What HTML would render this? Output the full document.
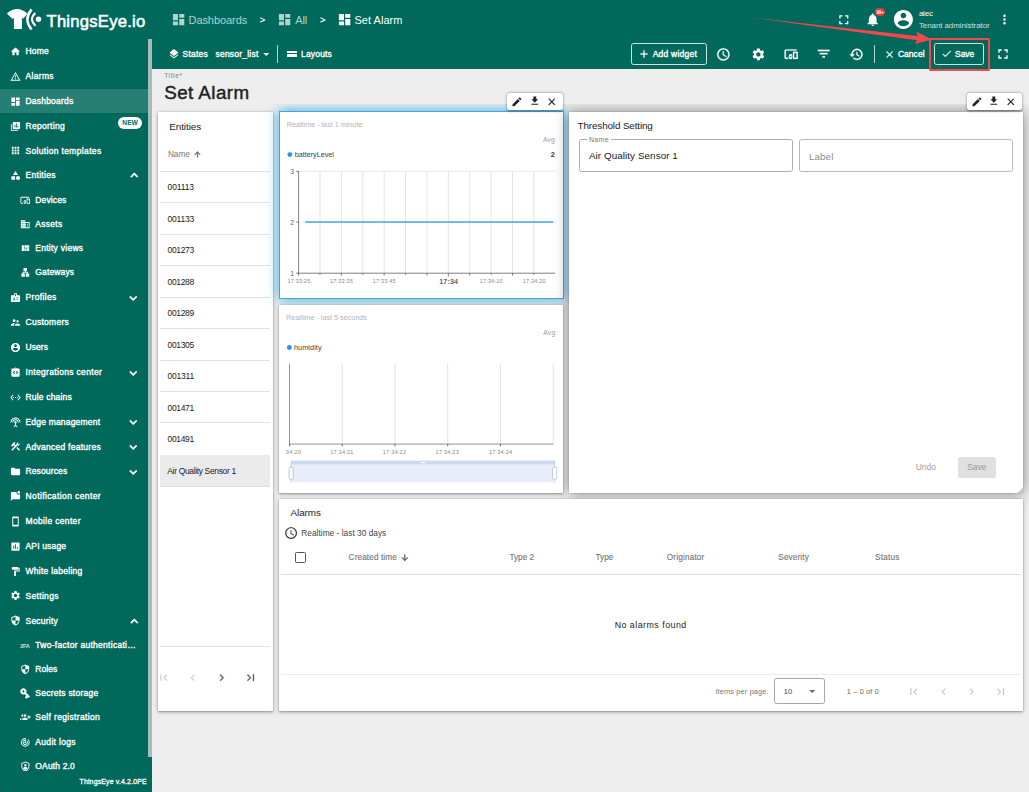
<!DOCTYPE html>
<html lang="en"><head><meta charset="utf-8"><title>Set Alarm - ThingsEye.io</title>
<style>
html,body{margin:0;padding:0}
body{width:1029px;height:792px;overflow:hidden;background:#eeeeee;position:relative;font-family:"Liberation Sans",sans-serif}
#app{position:absolute;left:0;top:0;width:1029px;height:792px;overflow:hidden}
#app div,#app svg,#app span{position:absolute;box-sizing:border-box}
.t{white-space:nowrap;font-weight:400}
.m{-webkit-text-stroke:0.04em currentColor}
.m2{-webkit-text-stroke:0.05em currentColor}
.b{font-weight:700}
.card{background:#fff;box-shadow:0 1px 2px rgba(0,0,0,.26),0 1px 5px rgba(0,0,0,.2),0 0 1px rgba(0,0,0,.2)}
</style></head><body><div id="app">
<div style="left:0px;top:0px;width:1029px;height:69px;background:#00695c"></div>
<div style="left:0px;top:39px;width:152px;height:753px;background:#00695c"></div>
<div style="left:0px;top:89px;width:148px;height:24px;background:rgba(255,255,255,.15)"></div>
<div style="left:148px;top:39px;width:4px;height:718px;background:#a6bcb8"></div>
<div style="left:0px;top:39px;width:148px;height:1px;background:rgba(0,0,0,.05)"></div>
<div style="left:0px;top:63px;width:148px;height:1px;background:rgba(0,0,0,.05)"></div>
<div style="left:0px;top:88px;width:148px;height:1px;background:rgba(0,0,0,.05)"></div>
<div style="left:0px;top:113px;width:148px;height:1px;background:rgba(0,0,0,.05)"></div>
<div style="left:0px;top:138px;width:148px;height:1px;background:rgba(0,0,0,.05)"></div>
<div style="left:0px;top:162px;width:148px;height:1px;background:rgba(0,0,0,.05)"></div>
<div style="left:0px;top:285px;width:148px;height:1px;background:rgba(0,0,0,.05)"></div>
<div style="left:0px;top:310px;width:148px;height:1px;background:rgba(0,0,0,.05)"></div>
<div style="left:0px;top:334px;width:148px;height:1px;background:rgba(0,0,0,.05)"></div>
<div style="left:0px;top:359px;width:148px;height:1px;background:rgba(0,0,0,.05)"></div>
<div style="left:0px;top:384px;width:148px;height:1px;background:rgba(0,0,0,.05)"></div>
<div style="left:0px;top:409px;width:148px;height:1px;background:rgba(0,0,0,.05)"></div>
<div style="left:0px;top:434px;width:148px;height:1px;background:rgba(0,0,0,.05)"></div>
<div style="left:0px;top:459px;width:148px;height:1px;background:rgba(0,0,0,.05)"></div>
<div style="left:0px;top:484px;width:148px;height:1px;background:rgba(0,0,0,.05)"></div>
<div style="left:0px;top:508px;width:148px;height:1px;background:rgba(0,0,0,.05)"></div>
<div style="left:0px;top:533px;width:148px;height:1px;background:rgba(0,0,0,.05)"></div>
<div style="left:0px;top:558px;width:148px;height:1px;background:rgba(0,0,0,.05)"></div>
<div style="left:0px;top:583px;width:148px;height:1px;background:rgba(0,0,0,.05)"></div>
<div style="left:0px;top:608px;width:148px;height:1px;background:rgba(0,0,0,.05)"></div>
<span id="t1" class="t" style="top:10.8px;font-size:16.6px;line-height:22px;color:#fff;letter-spacing:0.255px;left:46.5px;-webkit-text-stroke:0.55px #fff;">ThingsEye.io</span>
<svg style="left:0;top:0;width:46px;height:39px" viewBox="0 0 46 39"><path fill="#fff" d="M6.9 13.4 Q17.1 4.4 27.4 13.4 L23.3 18.7 L21.9 17.6 L21.9 29.1 L13.9 29.1 L13.9 17.8 L12.5 18.9 Z"/><path fill="none" stroke="#fff" stroke-width="2.5" d="M31.6 9.4 Q23.2 19.5 31.6 29.5"/><path fill="none" stroke="#fff" stroke-width="2.1" d="M35.3 12.9 Q28.6 19.3 35.5 25.7"/><circle fill="#fff" cx="38.5" cy="19.2" r="2.75"/></svg>
<svg style="left:9.8px;top:45.9px;width:11px;height:11px;" viewBox="0 0 24 24"><path fill="#fff" d="M10 20v-6h4v6h5v-8h3L12 3 2 12h3v8z"/></svg>
<span id="t2" class="t m" style="top:45.8px;font-size:8.5px;line-height:11px;color:#fff;letter-spacing:0.178px;left:25.5px;">Home</span>
<svg style="left:9.8px;top:70.8px;width:11px;height:11px;" viewBox="0 0 24 24"><path fill="#fff" d="M12 5.99L19.53 19H4.47L12 5.99M12 2L1 21h22L12 2zm1 14h-2v2h2v-2zm0-6h-2v4h2v-4z"/></svg>
<span id="t3" class="t m" style="top:70.8px;font-size:8.5px;line-height:11px;color:#fff;letter-spacing:0.324px;left:25.5px;">Alarms</span>
<svg style="left:9.8px;top:95.6px;width:11px;height:11px;" viewBox="0 0 24 24"><path fill="#fff" d="M3 13h8V3H3v10zm0 8h8v-6H3v6zm10 0h8V11h-8v10zm0-18v6h8V3h-8z"/></svg>
<span id="t4" class="t m" style="top:95.8px;font-size:8.5px;line-height:11px;color:#fff;letter-spacing:0.206px;left:25.5px;">Dashboards</span>
<svg style="left:9.8px;top:120.5px;width:11px;height:11px;" viewBox="0 0 24 24"><path fill="#fff" fill-rule="evenodd" d="M8 2h12c1.100 0 2 .9 2 2v12c0 1.100-.9 2-2 2H8c-1.100 0-2-.9-2-2V4c0-1.100.9-2 2-2z M10 14h1.800V8H10z M13.100 14h1.800V5.500h-1.800z M16.200 14H18v-3.500h-1.800z M2 6.500h1.800v13.700h13.700V22H4c-1.100 0-2-.9-2-2z"/></svg>
<span id="t5" class="t m" style="top:120.8px;font-size:8.5px;line-height:11px;color:#fff;letter-spacing:0.293px;left:25.5px;">Reporting</span>
<svg style="left:9.8px;top:145.3px;width:11px;height:11px;" viewBox="0 0 24 24"><path fill="#fff" d="M4 8h4V4H4v4zm6 12h4v-4h-4v4zm-6 0h4v-4H4v4zm0-6h4v-4H4v4zm6 0h4v-4h-4v4zm6-10v4h4V4h-4zm-6 4h4V4h-4v4zm6 6h4v-4h-4v4zm0 6h4v-4h-4v4z"/></svg>
<span id="t6" class="t m" style="top:145.8px;font-size:8.5px;line-height:11px;color:#fff;letter-spacing:0.337px;left:25.5px;">Solution templates</span>
<svg style="left:9.8px;top:169.8px;width:11px;height:11px;" viewBox="0 0 24 24"><path fill="#fff" d="M12 2l-5.5 9h11z M17.5 13a4.5 4.5 0 1 0 0 9 4.5 4.5 0 0 0 0-9z M3 13.5h8v8H3z"/></svg>
<span id="t7" class="t m" style="top:169.8px;font-size:8.5px;line-height:11px;color:#fff;letter-spacing:0.303px;left:25.5px;">Entities</span>
<svg style="left:9.8px;top:291.8px;width:11px;height:11px;" viewBox="0 0 24 24"><path fill="#fff" d="M20 7h-5V4c0-1.1-.9-2-2-2h-2c-1.1 0-2 .9-2 2v3H4c-1.1 0-2 .9-2 2v11c0 1.1.9 2 2 2h16c1.1 0 2-.9 2-2V9c0-1.1-.9-2-2-2zM9 12c.83 0 1.5.67 1.5 1.5S9.83 15 9 15s-1.5-.67-1.5-1.5S8.17 12 9 12zm3 6H6v-.75c0-1 2-1.5 3-1.5s3 .5 3 1.5V18zm1-9h-2V4h2v5zm5 7.5h-4V15h4v1.5zm0-3h-4V12h4v1.5z"/></svg>
<span id="t8" class="t m" style="top:291.8px;font-size:8.5px;line-height:11px;color:#fff;letter-spacing:0.357px;left:25.5px;">Profiles</span>
<svg style="left:9.8px;top:316.8px;width:11px;height:11px;" viewBox="0 0 24 24"><path fill="#fff" d="M16.5 12c1.38 0 2.49-1.12 2.49-2.5S17.88 7 16.5 7C15.12 7 14 8.12 14 9.5s1.12 2.5 2.500 2.5zM9 11c1.66 0 2.99-1.34 2.99-3S10.660 5 9 5C7.340 5 6 6.340 6 8s1.340 3 3 3zm7.500 3c-1.830 0-5.500.92-5.500 2.750V19h11v-2.250c0-1.830-3.670-2.750-5.500-2.750zM9 13c-2.330 0-7 1.170-7 3.500V19h7v-2.250c0-.85.33-2.340 2.370-3.470C10.500 13.100 9.660 13 9 13z"/></svg>
<span id="t9" class="t m" style="top:316.8px;font-size:8.5px;line-height:11px;color:#fff;letter-spacing:0.267px;left:25.5px;">Customers</span>
<svg style="left:9.8px;top:341.9px;width:11px;height:11px;" viewBox="0 0 24 24"><path fill="#fff" d="M12 2C6.480 2 2 6.480 2 12s4.480 10 10 10 10-4.480 10-10S17.520 2 12 2zm0 3c1.660 0 3 1.340 3 3s-1.340 3-3 3-3-1.340-3-3 1.340-3 3-3zm0 14.200c-2.500 0-4.710-1.280-6-3.220.03-1.990 4-3.080 6-3.080 1.990 0 5.970 1.090 6 3.080-1.290 1.940-3.500 3.220-6 3.220z"/></svg>
<span id="t10" class="t m" style="top:341.8px;font-size:8.5px;line-height:11px;color:#fff;letter-spacing:0.079px;left:25.5px;">Users</span>
<svg style="left:9.8px;top:366.9px;width:11px;height:11px;" viewBox="0 0 24 24"><path fill="#fff" d="M19 3h-4.180C14.400 1.840 13.300 1 12 1s-2.400.84-2.820 2H5c-1.100 0-2 .9-2 2v14c0 1.100.9 2 2 2h14c1.100 0 2-.9 2-2V5c0-1.100-.9-2-2-2zm-8 11.170-1.410 1.420L6 12l3.590-3.590L11 9.830 8.830 12 11 14.170zm1-9.920c-.41 0-.75-.34-.75-.75s.34-.75.75-.75.75.34.75.75-.34.75-.75.75zm2.410 11.340L13 14.170 15.170 12 13 9.830l1.410-1.420L18 12l-3.590 3.590z"/></svg>
<span id="t11" class="t m" style="top:366.8px;font-size:8.5px;line-height:11px;color:#fff;letter-spacing:0.326px;left:25.5px;">Integrations center</span>
<svg style="left:9.8px;top:391.7px;width:11px;height:11px;" viewBox="0 0 24 24"><path fill="#fff" d="M7.770 6.760L6.230 5.480.82 12l5.410 6.520 1.540-1.280L3.420 12l4.350-5.240zM7 13h2v-2H7v2zm10-2h-2v2h2v-2zm-6 2h2v-2h-2v2zm6.770-7.520l-1.540 1.280L20.580 12l-4.350 5.240 1.540 1.280L23.180 12l-5.410-6.520z"/></svg>
<span id="t12" class="t m" style="top:391.8px;font-size:8.5px;line-height:11px;color:#fff;letter-spacing:0.180px;left:25.5px;">Rule chains</span>
<svg style="left:9.8px;top:416.5px;width:11px;height:11px;" viewBox="0 0 24 24"><path fill="#fff" d="M12 5c-3.870 0-7 3.130-7 7h2c0-2.760 2.240-5 5-5s5 2.240 5 5h2c0-3.870-3.130-7-7-7zm1 9.290c.88-.39 1.500-1.260 1.500-2.290 0-1.380-1.120-2.500-2.500-2.500S9.500 10.620 9.500 12c0 1.020.62 1.900 1.500 2.290v3.300L7.590 21 9 22.410l3-3 3 3L16.410 21 13 17.590v-3.300zM12 1C5.930 1 1 5.930 1 12h2c0-4.970 4.030-9 9-9s9 4.030 9 9h2c0-6.070-4.930-11-11-11z"/></svg>
<span id="t13" class="t m" style="top:416.8px;font-size:8.5px;line-height:11px;color:#fff;letter-spacing:0.191px;left:25.5px;">Edge management</span>
<svg style="left:9.8px;top:441.3px;width:11px;height:11px;" viewBox="0 0 24 24"><path fill="#fff" d="M13.783 15.172l2.121-2.121 5.996 5.996-2.121 2.121zM17.500 10c1.930 0 3.500-1.570 3.500-3.500 0-.58-.16-1.120-.41-1.600l-2.700 2.700-1.490-1.490 2.700-2.700c-.48-.25-1.020-.41-1.600-.41C15.570 3 14 4.570 14 6.500c0 .41.080.8.210 1.160l-1.850 1.850-1.780-1.780.71-.71-1.410-1.410L12 3.490c-1.170-1.170-3.070-1.170-4.240 0L4.220 7.030l1.410 1.410H2.810l-.71.71 3.540 3.540.71-.71V9.150l1.410 1.410.71-.71 1.780 1.780-7.410 7.410 2.120 2.120L16.340 9.790c.36.130.75.210 1.160.210z"/></svg>
<span id="t14" class="t m" style="top:441.8px;font-size:8.5px;line-height:11px;color:#fff;letter-spacing:0.271px;left:25.5px;">Advanced features</span>
<svg style="left:9.8px;top:466.1px;width:11px;height:11px;" viewBox="0 0 24 24"><path fill="#fff" d="M10 4H4c-1.100 0-1.990.9-1.990 2L2 18c0 1.100.9 2 2 2h16c1.100 0 2-.9 2-2V8c0-1.100-.9-2-2-2h-8l-2-2z"/></svg>
<span id="t15" class="t m" style="top:465.8px;font-size:8.5px;line-height:11px;color:#fff;letter-spacing:0.129px;left:25.5px;">Resources</span>
<svg style="left:9.8px;top:490.9px;width:11px;height:11px;" viewBox="0 0 24 24"><path fill="#fff" d="M22 6.980V16c0 1.100-.9 2-2 2H6l-4 4V4c0-1.100.9-2 2-2h10.100c-.06.320-.1.660-.1 1 0 2.760 2.240 5 5 5 1.130 0 2.160-.39 3-1.020zM16 3c0 1.660 1.340 3 3 3s3-1.340 3-3-1.340-3-3-3-3 1.340-3 3z"/></svg>
<span id="t16" class="t m" style="top:490.8px;font-size:8.5px;line-height:11px;color:#fff;letter-spacing:0.392px;left:25.5px;">Notification center</span>
<svg style="left:9.8px;top:515.7px;width:11px;height:11px;" viewBox="0 0 24 24"><path fill="#fff" d="M17 1.010L7 1c-1.100 0-2 .9-2 2v18c0 1.100.9 2 2 2h10c1.100 0 2-.9 2-2V3c0-1.100-.9-1.990-2-1.990zM17 19H7V5h10v14z"/></svg>
<span id="t17" class="t m" style="top:515.8px;font-size:8.5px;line-height:11px;color:#fff;letter-spacing:0.328px;left:25.5px;">Mobile center</span>
<svg style="left:9.8px;top:540.8px;width:11px;height:11px;" viewBox="0 0 24 24"><path fill="#fff" d="M19 3H5c-1.100 0-2 .9-2 2v14c0 1.100.9 2 2 2h14c1.100 0 2-.9 2-2V5c0-1.100-.9-2-2-2zM9 17H7v-7h2v7zm4 0h-2V7h2v10zm4 0h-2v-4h2v4z"/></svg>
<span id="t18" class="t m" style="top:540.8px;font-size:8.5px;line-height:11px;color:#fff;letter-spacing:0.163px;left:25.5px;">API usage</span>
<svg style="left:9.8px;top:565.8px;width:11px;height:11px;" viewBox="0 0 24 24"><path fill="#fff" d="M18 4V3c0-.55-.45-1-1-1H5c-.55 0-1 .45-1 1v4c0 .55.45 1 1 1h12c.55 0 1-.45 1-1V6h1v4H9v11c0 .55.45 1 1 1h2c.55 0 1-.45 1-1v-9h8V4h-3z"/></svg>
<span id="t19" class="t m" style="top:565.8px;font-size:8.5px;line-height:11px;color:#fff;letter-spacing:0.265px;left:25.5px;">White labeling</span>
<svg style="left:9.8px;top:590.4px;width:11px;height:11px;" viewBox="0 0 24 24"><path fill="#fff" d="M19.140 12.940c.04-.3.060-.61.060-.94 0-.32-.02-.64-.07-.94l2.030-1.580c.18-.14.230-.41.120-.61l-1.920-3.320c-.12-.22-.37-.29-.59-.22l-2.390.96c-.5-.38-1.030-.7-1.620-.94l-.36-2.540c-.04-.24-.24-.41-.48-.41h-3.840c-.24 0-.43.170-.47.410l-.36 2.540c-.59.240-1.130.57-1.620.94l-2.390-.96c-.22-.08-.47 0-.59.220L2.740 8.870c-.12.210-.08.470.12.610l2.030 1.580c-.05.3-.09.630-.09.940s.02.640.07.940l-2.030 1.580c-.18.140-.23.410-.12.610l1.920 3.320c.12.220.37.290.59.220l2.390-.96c.5.380 1.030.7 1.620.94l.36 2.540c.05.240.24.410.48.410h3.840c.24 0 .44-.17.470-.41l.36-2.540c.59-.24 1.130-.56 1.620-.94l2.390.96c.22.080.47 0 .59-.22l1.920-3.320c.12-.22.070-.47-.12-.61l-2.010-1.580zM12 15.600c-1.980 0-3.600-1.620-3.600-3.600s1.620-3.600 3.600-3.600 3.600 1.620 3.600 3.600-1.620 3.600-3.600 3.600z"/></svg>
<span id="t20" class="t m" style="top:590.8px;font-size:8.5px;line-height:11px;color:#fff;letter-spacing:0.323px;left:25.5px;">Settings</span>
<svg style="left:9.8px;top:615.4px;width:11px;height:11px;" viewBox="0 0 24 24"><path fill="#fff" d="M12 1L3 5v6c0 5.550 3.840 10.740 9 12 5.160-1.260 9-6.450 9-12V5l-9-4zm0 10.990h7c-.53 4.120-3.280 7.790-7 8.940V12H5V6.300l7-3.110v8.800z"/></svg>
<span id="t21" class="t m" style="top:615.8px;font-size:8.5px;line-height:11px;color:#fff;letter-spacing:0.223px;left:25.5px;">Security</span>
<svg style="left:19.75px;top:194.85px;width:10.5px;height:10.5px;" viewBox="0 0 24 24"><path fill="#fff" d="M3 6h18V4H3c-1.1 0-2 .9-2 2v12c0 1.1.9 2 2 2h4v-2H3V6zm10 6H9v1.78c-.61.55-1 1.33-1 2.22s.39 1.67 1 2.22V20h4v-1.78c.61-.55 1-1.34 1-2.22s-.39-1.67-1-2.22V12zm-2 5.5c-.83 0-1.5-.67-1.5-1.5s.67-1.5 1.5-1.5 1.5.67 1.5 1.5-.67 1.5-1.5 1.5zM22 8h-6c-.5 0-1 .5-1 1v10c0 .5.5 1 1 1h6c.5 0 1-.5 1-1V9c0-.5-.5-1-1-1zm-1 10h-4v-8h4v8z"/></svg>
<span id="t22" class="t m" style="top:194.8px;font-size:8.5px;line-height:11px;color:#fff;letter-spacing:0.138px;left:35.3px;">Devices</span>
<svg style="left:19.75px;top:218.95px;width:10.5px;height:10.5px;" viewBox="0 0 24 24"><path fill="#fff" d="M12 7V3H2v18h20V7H12zM6 19H4v-2h2v2zm0-4H4v-2h2v2zm0-4H4V9h2v2zm0-4H4V5h2v2zm4 12H8v-2h2v2zm0-4H8v-2h2v2zm0-4H8V9h2v2zm0-4H8V5h2v2zm10 12h-8v-2h2v-2h-2v-2h2v-2h-2V9h8v10zm-2-8h-2v2h2v-2zm0 4h-2v2h2v-2z"/></svg>
<span id="t23" class="t m" style="top:218.8px;font-size:8.5px;line-height:11px;color:#fff;letter-spacing:0.264px;left:35.3px;">Assets</span>
<svg style="left:19.75px;top:243.15px;width:10.5px;height:10.5px;" viewBox="0 0 24 24"><path fill="#fff" d="M10 18h5v-6h-5v6zm-6 0h5V5H4v13zm12 0h5v-6h-5v6zM10 5v6h11V5H10z"/></svg>
<span id="t24" class="t m" style="top:242.8px;font-size:8.5px;line-height:11px;color:#fff;letter-spacing:0.260px;left:35.3px;">Entity views</span>
<svg style="left:19.75px;top:267.25px;width:10.5px;height:10.5px;" viewBox="0 0 24 24"><path fill="#fff" d="M13 22h8v-7h-3v-4h-5V9h3V2H8v7h3v2H6v4H3v7h8v-7H8v-2h8v2h-3v7z"/></svg>
<span id="t25" class="t m" style="top:266.8px;font-size:8.5px;line-height:11px;color:#fff;letter-spacing:0.138px;left:35.3px;">Gateways</span>
<svg style="left:19.75px;top:663.95px;width:10.5px;height:10.5px;" viewBox="0 0 24 24"><path fill="#fff" d="M12 1L3 5v6c0 5.550 3.840 10.740 9 12 5.160-1.260 9-6.450 9-12V5l-9-4zm0 10.990h7c-.53 4.120-3.280 7.790-7 8.940V12H5V6.300l7-3.110v8.800z"/></svg>
<span id="t26" class="t m" style="top:663.8px;font-size:8.5px;line-height:11px;color:#fff;letter-spacing:0.033px;left:35.3px;">Roles</span>
<svg style="left:18.55px;top:686.85px;width:12.5px;height:12.5px;transform:rotate(45deg);" viewBox="0 0 24 24"><path fill="#fff" d="M12.650 10C11.830 7.670 9.610 6 7 6c-3.310 0-6 2.690-6 6s2.690 6 6 6c2.610 0 4.830-1.670 5.650-4H17v4h4v-4h2v-4H12.650zM7 14c-1.100 0-2-.9-2-2s.9-2 2-2 2 .9 2 2-.9 2-2 2z"/></svg>
<span id="t27" class="t m" style="top:687.8px;font-size:8.5px;line-height:11px;color:#fff;letter-spacing:0.238px;left:35.3px;">Secrets storage</span>
<svg style="left:19.6px;top:712.1px;width:10.8px;height:10.8px;transform:scaleX(-1);" viewBox="0 0 24 24"><path fill="#fff" d="M8 10H5V7H3v3H0v2h3v3h2v-3h3v-2zm10 1c1.660 0 2.990-1.340 2.990-3S19.660 5 18 5c-.32 0-.63.05-.91.140.57.81.9 1.790.9 2.860s-.34 2.040-.9 2.860c.28.090.59.140.91.140zm-5 0c1.660 0 2.990-1.340 2.990-3S14.660 5 13 5c-1.660 0-3 1.340-3 3s1.340 3 3 3zm6.620 2.160c.83.730 1.380 1.660 1.380 2.840v2h3v-2c0-1.540-2.370-2.490-4.380-2.840zM13 13c-2 0-6 1-6 3v2h12v-2c0-2-4-3-6-3z"/></svg>
<span id="t28" class="t m" style="top:711.8px;font-size:8.5px;line-height:11px;color:#fff;letter-spacing:0.337px;left:35.3px;">Self registration</span>
<svg style="left:19.75px;top:736.75px;width:10.5px;height:10.5px;" viewBox="0 0 24 24"><path fill="#fff" d="M19.070 4.930l-1.410 1.410C19.100 7.790 20 9.790 20 12c0 4.420-3.580 8-8 8s-8-3.580-8-8c0-4.080 3.050-7.440 7-7.930v2.020C8.160 6.570 6 9.030 6 12c0 3.310 2.690 6 6 6s6-2.690 6-6c0-1.660-.67-3.160-1.760-4.240l-1.410 1.410C15.550 9.900 16 10.900 16 12c0 2.210-1.790 4-4 4s-4-1.790-4-4c0-1.860 1.280-3.410 3-3.860v2.140c-.6.350-1 .98-1 1.720 0 1.100.9 2 2 2s2-.9 2-2c0-.74-.4-1.380-1-1.720V2h-1C6.480 2 2 6.480 2 12s4.480 10 10 10 10-4.480 10-10c0-2.760-1.120-5.260-2.930-7.070z"/></svg>
<span id="t29" class="t m" style="top:736.8px;font-size:8.5px;line-height:11px;color:#fff;letter-spacing:0.326px;left:35.3px;">Audit logs</span>
<svg style="left:19.6px;top:760.7px;width:10.8px;height:10.8px;" viewBox="0 0 24 24"><path fill="#fff" fill-rule="evenodd" d="M12 1L3 5v6c0 5.550 3.840 10.740 9 12 5.160-1.260 9-6.450 9-12V5l-9-4z M12 3.190L5 6.300V11c0 4.520 2.980 8.690 7 9.930 4.020-1.240 7-5.410 7-9.930V6.300l-7-3.110z M12 6.800a2.600 2.600 0 1 0 0 5.200 2.600 2.600 0 0 0 0-5.200z M7.300 16.300c0-1.900 3.100-2.800 4.700-2.800s4.700.9 4.700 2.800c-1.100 1.700-2.700 2.900-4.700 3.500-2-.6-3.600-1.800-4.700-3.500z"/></svg>
<span id="t30" class="t m" style="top:760.8px;font-size:8.5px;line-height:11px;color:#fff;letter-spacing:0.158px;left:35.3px;">OAuth 2.0</span>
<span id="t31" class="t b" style="top:642.8px;font-size:5.6px;line-height:7px;color:rgba(255,255,255,.8);letter-spacing:-0.289px;left:20.2px;">2FA</span>
<span id="t32" class="t m" style="top:639.8px;font-size:8.5px;line-height:11px;color:#fff;letter-spacing:0.279px;left:35.3px;">Two-factor authenticati…</span>
<svg style="left:126.95px;top:168.35px;width:14.5px;height:14.5px;" viewBox="0 0 24 24"><path fill="#fff" stroke="#fff" stroke-width="1.2" d="M12 8l-6 6 1.410 1.410L12 10.830l4.590 4.580L18 14z"/></svg>
<svg style="left:126.95px;top:613.95px;width:14.5px;height:14.5px;" viewBox="0 0 24 24"><path fill="#fff" stroke="#fff" stroke-width="1.2" d="M12 8l-6 6 1.410 1.410L12 10.830l4.590 4.580L18 14z"/></svg>
<svg style="left:126.45px;top:290.85px;width:14.5px;height:14.5px;" viewBox="0 0 24 24"><path fill="#fff" stroke="#fff" stroke-width="1.2" d="M16.590 8.590L12 13.170 7.410 8.590 6 10l6 6 6-6z"/></svg>
<svg style="left:126.45px;top:365.85px;width:14.5px;height:14.5px;" viewBox="0 0 24 24"><path fill="#fff" stroke="#fff" stroke-width="1.2" d="M16.590 8.590L12 13.170 7.410 8.590 6 10l6 6 6-6z"/></svg>
<svg style="left:126.45px;top:415.45px;width:14.5px;height:14.5px;" viewBox="0 0 24 24"><path fill="#fff" stroke="#fff" stroke-width="1.2" d="M16.590 8.590L12 13.170 7.410 8.590 6 10l6 6 6-6z"/></svg>
<svg style="left:126.45px;top:440.25px;width:14.5px;height:14.5px;" viewBox="0 0 24 24"><path fill="#fff" stroke="#fff" stroke-width="1.2" d="M16.590 8.590L12 13.170 7.410 8.590 6 10l6 6 6-6z"/></svg>
<svg style="left:126.45px;top:465.05px;width:14.5px;height:14.5px;" viewBox="0 0 24 24"><path fill="#fff" stroke="#fff" stroke-width="1.2" d="M16.590 8.590L12 13.170 7.410 8.590 6 10l6 6 6-6z"/></svg>
<div style="left:118.2px;top:116.8px;width:23.8px;height:12px;background:#fff;border-radius:6px"></div>
<span id="t33" class="t b" style="top:118.3px;font-size:6.6px;line-height:9px;color:#00695c;letter-spacing:0.036px;left:130.08px;transform:translateX(-50%);">NEW</span>
<span id="t34" class="t m" style="top:777.3px;font-size:6.9px;line-height:9px;color:#fff;letter-spacing:0.182px;left:79.5px;">ThingsEye v.4.2.0PE</span>
<svg style="left:0;top:0;width:3px;height:3px" viewBox="0 0 3 3"><path fill="#5e5660" d="M0 0H2.6A2.600 2.600 0 0 0 0 2.600Z"/></svg>
<svg style="left:0;top:789px;width:3px;height:3px" viewBox="0 0 3 3"><path fill="#5e5660" d="M0 3H2.600A2.600 2.600 0 0 1 0 .4Z"/></svg>
<span id="t35" class="t" style="top:71.3px;font-size:6.6px;line-height:9px;color:#808080;letter-spacing:0.603px;left:164.2px;">Title*</span>
<span id="t36" class="t" style="top:80.8px;font-size:18.8px;line-height:24px;color:#212121;letter-spacing:0.442px;left:164.2px;-webkit-text-stroke:0.42px #212121;">Set Alarm</span>
<div class="card" style="left:158px;top:112px;width:114.9px;height:598.5px;"></div>
<span id="t37" class="t" style="top:120.3px;font-size:9.9px;line-height:13px;color:#212121;letter-spacing:-0.086px;left:169.3px;">Entities</span>
<span id="t38" class="t" style="top:148.8px;font-size:8.3px;line-height:11px;color:#757575;letter-spacing:-0.060px;left:167.9px;">Name</span>
<svg style="left:192.5px;top:149.9px;width:8.8px;height:8.8px;" viewBox="0 0 24 24"><path fill="#555" stroke="#555" stroke-width="0.8" d="M4 12l1.410 1.410L11 7.830V20h2V7.830l5.580 5.590L20 12l-8-8-8 8z"/></svg>
<div style="left:160.2px;top:171px;width:110.1px;height:1px;background:#e2e2e2"></div>
<span id="t39" class="t" style="top:181.8px;font-size:8.5px;line-height:11px;color:#212121;letter-spacing:-0.135px;left:167.6px;">001113</span>
<div style="left:160.2px;top:202px;width:110.1px;height:1px;background:#e2e2e2"></div>
<span id="t40" class="t" style="top:213.8px;font-size:8.5px;line-height:11px;color:#212121;letter-spacing:-0.239px;left:167.6px;">001133</span>
<div style="left:160.2px;top:234px;width:110.1px;height:1px;background:#e2e2e2"></div>
<span id="t41" class="t" style="top:244.8px;font-size:8.5px;line-height:11px;color:#212121;letter-spacing:-0.346px;left:167.6px;">001273</span>
<div style="left:160.2px;top:265px;width:110.1px;height:1px;background:#e2e2e2"></div>
<span id="t42" class="t" style="top:276.8px;font-size:8.5px;line-height:11px;color:#212121;letter-spacing:-0.346px;left:167.6px;">001288</span>
<div style="left:160.2px;top:297px;width:110.1px;height:1px;background:#e2e2e2"></div>
<span id="t43" class="t" style="top:307.8px;font-size:8.5px;line-height:11px;color:#212121;letter-spacing:-0.346px;left:167.6px;">001289</span>
<div style="left:160.2px;top:328px;width:110.1px;height:1px;background:#e2e2e2"></div>
<span id="t44" class="t" style="top:339.8px;font-size:8.5px;line-height:11px;color:#212121;letter-spacing:-0.346px;left:167.6px;">001305</span>
<div style="left:160.2px;top:360px;width:110.1px;height:1px;background:#e2e2e2"></div>
<span id="t45" class="t" style="top:370.8px;font-size:8.5px;line-height:11px;color:#212121;letter-spacing:-0.239px;left:167.6px;">001311</span>
<div style="left:160.2px;top:391px;width:110.1px;height:1px;background:#e2e2e2"></div>
<span id="t46" class="t" style="top:402.8px;font-size:8.5px;line-height:11px;color:#212121;letter-spacing:-0.346px;left:167.6px;">001471</span>
<div style="left:160.2px;top:422px;width:110.1px;height:1px;background:#e2e2e2"></div>
<span id="t47" class="t" style="top:433.8px;font-size:8.5px;line-height:11px;color:#212121;letter-spacing:-0.346px;left:167.6px;">001491</span>
<div style="left:159.8px;top:455px;width:110.6px;height:31.6px;background:#ebebeb"></div>
<div style="left:159.8px;top:486px;width:110.6px;height:1px;background:#dcdcdc"></div>
<span id="t48" class="t" style="top:465.8px;font-size:8.5px;line-height:11px;color:#212121;letter-spacing:-0.355px;left:167.3px;">Air Quality Sensor 1</span>
<div style="left:159.8px;top:646px;width:110.6px;height:1px;background:#e2e2e2"></div>
<svg style="left:157.2px;top:671.2px;width:13.4px;height:13.4px;" viewBox="0 0 24 24"><path fill="#cdcdcd" d="M18.410 16.590L13.820 12l4.590-4.590L17 6l-6 6 6 6zM6 6h2v12H6z"/></svg>
<svg style="left:186.3px;top:671.2px;width:13.4px;height:13.4px;" viewBox="0 0 24 24"><path fill="#cdcdcd" d="M15.410 7.410L14 6l-6 6 6 6 1.410-1.410L10.830 12z"/></svg>
<svg style="left:215.1px;top:671.2px;width:13.4px;height:13.4px;" viewBox="0 0 24 24"><path fill="#606060" stroke="#606060" stroke-width="0.5" d="M10 6L8.590 7.410 13.170 12l-4.580 4.590L10 18l6-6z"/></svg>
<svg style="left:244.3px;top:671.2px;width:13.4px;height:13.4px;" viewBox="0 0 24 24"><path fill="#606060" stroke="#606060" stroke-width="0.5" d="M5.590 7.410L10.180 12l-4.590 4.590L7 18l6-6-6-6zM16 6h2v12h-2z"/></svg>
<div style="left:152px;top:104.4px;width:877px;height:688px;overflow:hidden"><div style="left:127px;top:6.600px;width:285px;height:188px;background:#fff;border:1px solid #42a5e0;box-shadow:0 0 12px rgba(3,155,229,.8)"></div></div>
<div style="left:507.1px;top:92.7px;width:55.8px;height:17.2px;background:#fff;border-radius:2.5px;box-shadow:0 .5px 2.5px rgba(0,0,0,.5)"></div>
<svg style="left:511.4px;top:95.5px;width:11.8px;height:11.8px;" viewBox="0 0 24 24"><path fill="#222" d="M3 17.250V21h3.750L17.810 9.940l-3.750-3.750L3 17.250zM20.710 7.040c.39-.39.39-1.020 0-1.410l-2.340-2.340c-.39-.39-1.020-.39-1.410 0l-1.830 1.830 3.750 3.750 1.830-1.830z"/></svg>
<svg style="left:528.8px;top:95.3px;width:11.6px;height:11.6px;" viewBox="0 0 24 24"><path fill="#222" d="M19 9h-4V3H9v6H5l7 7 7-7zM5 18v2h14v-2H5z"/></svg>
<svg style="left:545.7px;top:95.6px;width:11.6px;height:11.6px;" viewBox="0 0 24 24"><path fill="#222" stroke="#222" stroke-width="0.4" d="M19 6.410L17.590 5 12 10.590 6.410 5 5 6.410 10.590 12 5 17.590 6.410 19 12 13.410 17.590 19 19 17.590 13.410 12z"/></svg>
<span id="t49" class="t" style="top:120.3px;font-size:7.3px;line-height:9px;color:#b4b4b4;letter-spacing:-0.048px;left:286.8px;">Realtime - last 1 minute</span>
<span id="t50" class="t" style="top:135.3px;font-size:6.8px;line-height:9px;color:#a0a0a0;letter-spacing:0.135px;right:474.06px;">Avg</span>
<svg style="left:286px;top:151px;width:8px;height:8px" viewBox="0 0 8 8"><circle cx="3.85" cy="3.55" r="2.400" fill="#2196f3"/></svg>
<span id="t51" class="t" style="top:150.3px;font-size:7.3px;line-height:9px;color:#424242;letter-spacing:-0.047px;left:294.7px;">batteryLevel</span>
<span id="t52" class="t b" style="top:150.3px;font-size:7.3px;line-height:9px;color:#333;letter-spacing:0.338px;right:473.86px;">2</span>
<svg style="left:280px;top:160px;width:282px;height:130px" viewBox="280 160 282 130"><path d="M319.99 171.3V273.2" stroke="#d4d4d4" stroke-width=".65"/><path d="M341.38 171.3V273.2" stroke="#d4d4d4" stroke-width=".65"/><path d="M362.77 171.3V273.2" stroke="#d4d4d4" stroke-width=".65"/><path d="M384.16 171.3V273.2" stroke="#d4d4d4" stroke-width=".65"/><path d="M405.55 171.3V273.2" stroke="#d4d4d4" stroke-width=".65"/><path d="M426.94 171.3V273.2" stroke="#d4d4d4" stroke-width=".65"/><path d="M448.33 171.3V273.2" stroke="#d4d4d4" stroke-width=".65"/><path d="M469.72 171.3V273.2" stroke="#d4d4d4" stroke-width=".65"/><path d="M491.11 171.3V273.2" stroke="#d4d4d4" stroke-width=".65"/><path d="M512.50 171.3V273.2" stroke="#d4d4d4" stroke-width=".65"/><path d="M533.89 171.3V273.2" stroke="#d4d4d4" stroke-width=".65"/><path d="M298.6 171.3H555.3" stroke="#e0e0e0" stroke-width=".7"/><path d="M298.6 222.1H555.3" stroke="#e0e0e0" stroke-width=".7"/><path d="M298.6 171V273.5M298.2 273.2H555.3" stroke="#555" stroke-width=".75" fill="none"/><path d="M296.2 171.3H298.6" stroke="#555" stroke-width=".75"/><path d="M296.2 222.1H298.6" stroke="#555" stroke-width=".75"/><path d="M296.2 273.2H298.6" stroke="#555" stroke-width=".75"/><path d="M298.60 273.2v2.4" stroke="#555" stroke-width=".75"/><path d="M319.99 273.2v1.6" stroke="#555" stroke-width=".75"/><path d="M341.38 273.2v2.4" stroke="#555" stroke-width=".75"/><path d="M362.77 273.2v1.6" stroke="#555" stroke-width=".75"/><path d="M384.16 273.2v2.4" stroke="#555" stroke-width=".75"/><path d="M405.55 273.2v1.6" stroke="#555" stroke-width=".75"/><path d="M426.94 273.2v2.4" stroke="#555" stroke-width=".75"/><path d="M448.33 273.2v3.4" stroke="#555" stroke-width=".75"/><path d="M469.72 273.2v2.4" stroke="#555" stroke-width=".75"/><path d="M491.11 273.2v1.6" stroke="#555" stroke-width=".75"/><path d="M512.50 273.2v2.4" stroke="#555" stroke-width=".75"/><path d="M533.89 273.2v1.6" stroke="#555" stroke-width=".75"/><path d="M305.3 222.1H553.2" stroke="#4aa3ec" stroke-width="1.5"/></svg>
<span id="t53" class="t" style="top:167.3px;font-size:7px;line-height:9px;color:#666;letter-spacing:-0.006px;right:734.91px;">3</span>
<span id="t54" class="t" style="top:218.3px;font-size:7px;line-height:9px;color:#666;letter-spacing:-0.006px;right:734.91px;">2</span>
<span id="t55" class="t" style="top:269.3px;font-size:7px;line-height:9px;color:#666;letter-spacing:-0.006px;right:734.91px;">1</span>
<span id="t56" class="t" style="top:277.8px;font-size:5.6px;line-height:7px;color:#8a8a8a;letter-spacing:0.152px;left:298.92px;transform:translateX(-50%);">17:33:25</span>
<span id="t57" class="t" style="top:277.8px;font-size:5.6px;line-height:7px;color:#8a8a8a;letter-spacing:0.152px;left:341.42px;transform:translateX(-50%);">17:33:35</span>
<span id="t58" class="t" style="top:277.8px;font-size:5.6px;line-height:7px;color:#8a8a8a;letter-spacing:0.152px;left:384.32px;transform:translateX(-50%);">17:33:45</span>
<span id="t59" class="t" style="top:277.8px;font-size:5.6px;line-height:7px;color:#8a8a8a;letter-spacing:0.152px;left:491.22px;transform:translateX(-50%);">17:34:10</span>
<span id="t60" class="t" style="top:277.8px;font-size:5.6px;line-height:7px;color:#8a8a8a;letter-spacing:0.152px;left:534.32px;transform:translateX(-50%);">17:34:20</span>
<span id="t61" class="t b" style="top:277.3px;font-size:7.2px;line-height:9px;color:#666;letter-spacing:0.122px;left:448.74px;transform:translateX(-50%);">17:34</span>
<div style="left:152px;top:104.4px;width:877px;height:688px;overflow:hidden"><div style="left:417.100px;top:7.200px;width:454.100px;height:381.500px;background:#fff;box-shadow:0 0 14px rgba(0,0,0,.46),0 0 1.500px rgba(0,0,0,.25)"></div></div>
<div style="left:966.5px;top:92.7px;width:55.5px;height:17.2px;background:#fff;border-radius:2.5px;box-shadow:0 .5px 2.5px rgba(0,0,0,.5)"></div>
<svg style="left:970.8px;top:95.5px;width:11.8px;height:11.8px;" viewBox="0 0 24 24"><path fill="#222" d="M3 17.250V21h3.750L17.810 9.940l-3.750-3.750L3 17.250zM20.710 7.040c.39-.39.39-1.020 0-1.410l-2.340-2.340c-.39-.39-1.020-.39-1.410 0l-1.830 1.830 3.750 3.750 1.830-1.830z"/></svg>
<svg style="left:988.2px;top:95.3px;width:11.6px;height:11.6px;" viewBox="0 0 24 24"><path fill="#222" d="M19 9h-4V3H9v6H5l7 7 7-7zM5 18v2h14v-2H5z"/></svg>
<svg style="left:1005.1px;top:95.6px;width:11.6px;height:11.6px;" viewBox="0 0 24 24"><path fill="#222" stroke="#222" stroke-width="0.4" d="M19 6.410L17.590 5 12 10.590 6.410 5 5 6.410 10.590 12 5 17.590 6.410 19 12 13.410 17.590 19 19 17.590 13.410 12z"/></svg>
<span id="t62" class="t" style="top:119.3px;font-size:9.9px;line-height:13px;color:#212121;letter-spacing:-0.136px;left:577.6px;">Threshold Setting</span>
<div style="left:579.2px;top:139.3px;width:213.4px;height:32.7px;border:1px solid #adadad;border-radius:2.5px"></div>
<div style="left:586.9px;top:138.5px;width:24px;height:3px;background:#fff"></div>
<span id="t63" class="t" style="top:135.3px;font-size:6.9px;line-height:9px;color:#777;letter-spacing:0.427px;left:588.9px;">Name</span>
<span id="t64" class="t" style="top:149.3px;font-size:9.9px;line-height:13px;color:#212121;letter-spacing:0.059px;left:588.9px;">Air Quality Sensor 1</span>
<div style="left:799.2px;top:139.3px;width:213.5px;height:32.7px;border:1px solid #b8b8b8;border-radius:2.5px"></div>
<span id="t65" class="t" style="top:150.3px;font-size:9.7px;line-height:13px;color:#8c8c8c;letter-spacing:0.176px;left:808.9px;">Label</span>
<span id="t66" class="t" style="top:461.8px;font-size:8.5px;line-height:11px;color:#a0a0a0;letter-spacing:-0.007px;left:915.7px;">Undo</span>
<div style="left:957.6px;top:457.1px;width:38.5px;height:20.9px;background:#e0e0e0;border-radius:2.5px"></div>
<span id="t67" class="t" style="top:461.8px;font-size:8.5px;line-height:11px;color:#9a9a9a;letter-spacing:-0.094px;left:967.2px;">Save</span>
<svg style="left:1016.8px;top:486.700px;width:6.400px;height:6.400px" viewBox="0 0 7 7"><path fill="#c9c9c9" d="M7 0V7H0Z"/></svg>
<div class="card" style="left:278.7px;top:304.8px;width:284.3px;height:188.2px;"></div>
<span id="t68" class="t" style="top:313.3px;font-size:7.3px;line-height:9px;color:#b4b4b4;letter-spacing:-0.049px;left:286.1px;">Realtime - last 5 seconds</span>
<span id="t69" class="t" style="top:328.3px;font-size:6.8px;line-height:9px;color:#a0a0a0;letter-spacing:0.269px;right:473.43px;">Avg</span>
<svg style="left:285px;top:344px;width:8px;height:8px" viewBox="0 0 8 8"><circle cx="4.35" cy="3.55" r="2.45" fill="#2196f3"/></svg>
<span id="t70" class="t" style="top:343.3px;font-size:7.3px;line-height:9px;color:#424242;letter-spacing:0.079px;left:293.9px;">humidity</span>
<svg style="left:280px;top:360px;width:282px;height:130px" viewBox="280 360 282 130"><path d="M342.24 363.7V444.1" stroke="#d6d6d6" stroke-width=".7"/><path d="M394.98 363.7V444.1" stroke="#d6d6d6" stroke-width=".7"/><path d="M447.72 363.7V444.1" stroke="#d6d6d6" stroke-width=".7"/><path d="M500.46 363.7V444.1" stroke="#d6d6d6" stroke-width=".7"/><path d="M553.20 363.7V444.1" stroke="#d6d6d6" stroke-width=".7"/><path d="M289.5 363.7V444.5M289.1 444.1H553.4" stroke="#777" stroke-width=".8" fill="none"/><path d="M289.50 444.1v2.2" stroke="#444" stroke-width=".8"/><path d="M342.24 444.1v2.2" stroke="#444" stroke-width=".8"/><path d="M394.98 444.1v2.2" stroke="#444" stroke-width=".8"/><path d="M447.72 444.1v2.2" stroke="#444" stroke-width=".8"/><path d="M500.46 444.1v2.2" stroke="#444" stroke-width=".8"/><rect x="291.1" y="460.7" width="263.6" height="21.7" fill="#e7edfb"/><rect x="291.1" y="460.7" width="263.6" height="3.6" fill="#cdd8f2"/><rect x="421" y="462" width="4" height="1" fill="#fff"/><path d="M291.1 460.7V482.4M554.7 460.7V482.4" stroke="#b9c6e6" stroke-width=".7"/><rect x="289.1" y="467.3" width="4.2" height="12" rx="1" fill="#fff" stroke="#aab6d4" stroke-width=".7"/><rect x="552.6" y="467.3" width="4.2" height="12" rx="1" fill="#fff" stroke="#aab6d4" stroke-width=".7"/></svg>
<span id="t71" class="t" style="top:448.8px;font-size:5.6px;line-height:7px;color:#8a8a8a;letter-spacing:0.320px;left:285.8px;">34:20</span>
<span id="t72" class="t" style="top:448.8px;font-size:5.6px;line-height:7px;color:#8a8a8a;letter-spacing:0.202px;left:341.9px;transform:translateX(-50%);">17:34:21</span>
<span id="t73" class="t" style="top:448.8px;font-size:5.6px;line-height:7px;color:#8a8a8a;letter-spacing:0.202px;left:394.5px;transform:translateX(-50%);">17:34:22</span>
<span id="t74" class="t" style="top:448.8px;font-size:5.6px;line-height:7px;color:#8a8a8a;letter-spacing:0.202px;left:447.3px;transform:translateX(-50%);">17:34:23</span>
<span id="t75" class="t" style="top:448.8px;font-size:5.6px;line-height:7px;color:#8a8a8a;letter-spacing:0.202px;left:500.6px;transform:translateX(-50%);">17:34:24</span>
<div class="card" style="left:278.7px;top:499.1px;width:744.7px;height:211.7px;"></div>
<span id="t76" class="t" style="top:506.3px;font-size:9.9px;line-height:13px;color:#212121;letter-spacing:-0.022px;left:290.4px;">Alarms</span>
<svg style="left:284.1px;top:525.9px;width:14.2px;height:14.2px;" viewBox="0 0 24 24"><path fill="#333" d="M11.990 2C6.470 2 2 6.480 2 12s4.470 10 9.990 10C17.520 22 22 17.520 22 12S17.520 2 11.990 2zM12 20c-4.420 0-8-3.580-8-8s3.580-8 8-8 8 3.580 8 8-3.580 8-8 8zm.5-13H11v6l5.250 3.150.75-1.230-4.500-2.670z"/></svg>
<span id="t77" class="t" style="top:527.8px;font-size:8.3px;line-height:11px;color:#444;letter-spacing:0.026px;left:301.3px;">Realtime - last 30 days</span>
<div style="left:294.8px;top:551.9px;width:11.6px;height:11.3px;border:1.3px solid #555;border-radius:1.4px"></div>
<span id="t78" class="t" style="top:552.3px;font-size:8.2px;line-height:11px;color:#757575;letter-spacing:0.119px;left:348.6px;-webkit-text-stroke:0.12px #757575;">Created time</span>
<span id="t79" class="t" style="top:552.3px;font-size:8.2px;line-height:11px;color:#757575;letter-spacing:-0.013px;left:509.5px;-webkit-text-stroke:0.12px #757575;">Type 2</span>
<span id="t80" class="t" style="top:552.3px;font-size:8.2px;line-height:11px;color:#757575;letter-spacing:-0.037px;left:595.6px;-webkit-text-stroke:0.12px #757575;">Type</span>
<span id="t81" class="t" style="top:552.3px;font-size:8.2px;line-height:11px;color:#757575;letter-spacing:0.185px;left:666.7px;-webkit-text-stroke:0.12px #757575;">Originator</span>
<span id="t82" class="t" style="top:552.3px;font-size:8.2px;line-height:11px;color:#757575;letter-spacing:0.128px;left:778.3px;-webkit-text-stroke:0.12px #757575;">Severity</span>
<span id="t83" class="t" style="top:552.3px;font-size:8.2px;line-height:11px;color:#757575;letter-spacing:0.230px;left:875px;-webkit-text-stroke:0.12px #757575;">Status</span>
<svg style="left:399.9px;top:552.6px;width:9.6px;height:9.6px;" viewBox="0 0 24 24"><path fill="#555" stroke="#555" stroke-width="0.9" d="M20 12l-1.410-1.410L13 16.170V4h-2v12.170l-5.580-5.590L4 12l8 8 8-8z"/></svg>
<div style="left:281.2px;top:574px;width:739.4px;height:1px;background:#dedede"></div>
<span id="t84" class="t" style="top:619.8px;font-size:8.8px;line-height:11px;color:#212121;letter-spacing:0.497px;left:614.7px;">No alarms found</span>
<div style="left:281.2px;top:674px;width:739.4px;height:1px;background:#ececec"></div>
<span id="t85" class="t" style="top:687.3px;font-size:7.3px;line-height:9px;color:#757575;letter-spacing:0.180px;left:715.4px;">Items per page:</span>
<div style="left:773.8px;top:678.4px;width:51.1px;height:25.2px;border:1px solid #a6a6a6;border-radius:2.5px"></div>
<span id="t86" class="t" style="top:686.8px;font-size:7.6px;line-height:10px;color:#444;letter-spacing:-0.127px;left:783.8px;">10</span>
<svg style="left:804.55px;top:684.35px;width:14.5px;height:14.5px;" viewBox="0 0 24 24"><path fill="#666" d="M7 10l5 5 5-5z"/></svg>
<span id="t87" class="t" style="top:687.3px;font-size:7.3px;line-height:9px;color:#666;letter-spacing:0.196px;left:846.7px;">1 – 0 of 0</span>
<svg style="left:906.5px;top:684.5px;width:13.4px;height:13.4px;" viewBox="0 0 24 24"><path fill="#c6c6c6" d="M18.410 16.590L13.820 12l4.590-4.590L17 6l-6 6 6 6zM6 6h2v12H6z"/></svg>
<svg style="left:936.6px;top:684.5px;width:13.4px;height:13.4px;" viewBox="0 0 24 24"><path fill="#c6c6c6" d="M15.410 7.410L14 6l-6 6 6 6 1.410-1.410L10.830 12z"/></svg>
<svg style="left:964.9px;top:684.5px;width:13.4px;height:13.4px;" viewBox="0 0 24 24"><path fill="#c6c6c6" d="M10 6L8.590 7.410 13.170 12l-4.580 4.590L10 18l6-6z"/></svg>
<svg style="left:994.3px;top:684.5px;width:13.4px;height:13.4px;" viewBox="0 0 24 24"><path fill="#c6c6c6" d="M5.590 7.410L10.180 12l-4.590 4.590L7 18l6-6-6-6zM16 6h2v12h-2z"/></svg>
<svg style="left:170.7px;top:12px;width:15.2px;height:15.2px;opacity:0.7;" viewBox="0 0 24 24"><path fill="#fff" d="M3 13h8V3H3v10zm0 8h8v-6H3v6zm10 0h8V11h-8v10zm0-18v6h8V3h-8z"/></svg>
<span id="t88" class="t" style="top:13.3px;font-size:11px;line-height:14px;color:rgba(255,255,255,.7);letter-spacing:-0.063px;left:188.5px;">Dashboards</span>
<span id="t89" class="t" style="top:13.8px;font-size:9.5px;line-height:12px;color:#fff;letter-spacing:-0.562px;left:259.8px;-webkit-text-stroke:0.15px #fff;">&gt;</span>
<svg style="left:277.1px;top:12px;width:15.2px;height:15.2px;opacity:0.7;" viewBox="0 0 24 24"><path fill="#fff" d="M3 13h8V3H3v10zm0 8h8v-6H3v6zm10 0h8V11h-8v10zm0-18v6h8V3h-8z"/></svg>
<span id="t90" class="t" style="top:13.3px;font-size:11px;line-height:14px;color:rgba(255,255,255,.7);letter-spacing:-0.145px;left:295.2px;">All</span>
<span id="t91" class="t" style="top:13.8px;font-size:9.5px;line-height:12px;color:#fff;letter-spacing:-0.562px;left:320px;-webkit-text-stroke:0.15px #fff;">&gt;</span>
<svg style="left:336.9px;top:12px;width:15.2px;height:15.2px;" viewBox="0 0 24 24"><path fill="#fff" d="M3 13h8V3H3v10zm0 8h8v-6H3v6zm10 0h8V11h-8v10zm0-18v6h8V3h-8z"/></svg>
<span id="t92" class="t" style="top:13.3px;font-size:11px;line-height:14px;color:#fff;letter-spacing:0.035px;left:354.5px;">Set Alarm</span>
<svg style="left:835.5px;top:11.5px;width:15.6px;height:15.6px;" viewBox="0 0 24 24"><path fill="#fff" d="M7 14H5v5h5v-2H7v-3zm-2-4h2V7h3V5H5v5zm12 7h-3v2h5v-5h-2v3zM14 5v2h3v3h2V5h-5z"/></svg>
<svg style="left:865.1px;top:11.9px;width:15.4px;height:15.4px;" viewBox="0 0 24 24"><path fill="#fff" d="M12 22c1.100 0 2-.9 2-2h-4c0 1.100.89 2 2 2zm6-6v-5c0-3.070-1.640-5.640-4.500-6.320V4c0-.83-.67-1.500-1.500-1.500s-1.500.67-1.500 1.500v.68C7.630 5.360 6 7.920 6 11v5l-2 2v1h16v-1l-2-2z"/></svg>
<div style="left:875.3px;top:7.7px;width:9.4px;height:8.7px;background:#e53935;border-radius:5px"></div>
<span id="t93" class="t b" style="top:9.8px;font-size:4.6px;line-height:6px;color:#fff;letter-spacing:-0.199px;left:880.1px;transform:translateX(-50%);">99+</span>
<svg style="left:891.6px;top:7.9px;width:22.8px;height:22.8px;" viewBox="0 0 24 24"><path fill="#fff" d="M12 2C6.480 2 2 6.480 2 12s4.480 10 10 10 10-4.480 10-10S17.520 2 12 2zm0 3c1.660 0 3 1.340 3 3s-1.340 3-3 3-3-1.340-3-3 1.340-3 3-3zm0 14.200c-2.500 0-4.710-1.280-6-3.220.03-1.990 4-3.080 6-3.080 1.990 0 5.970 1.090 6 3.080-1.290 1.940-3.500 3.220-6 3.220z"/></svg>
<span id="t94" class="t" style="top:8.8px;font-size:8px;line-height:10px;color:#fff;letter-spacing:-0.222px;left:918.9px;">alec</span>
<span id="t95" class="t" style="top:20.8px;font-size:8px;line-height:10px;color:rgba(255,255,255,.8);letter-spacing:-0.089px;left:918.9px;">Tenant administrator</span>
<svg style="left:997.2px;top:11.8px;width:15px;height:15px;" viewBox="0 0 24 24"><path fill="#fff" d="M12 8c1.100 0 2-.9 2-2s-.9-2-2-2-2 .9-2 2 .9 2 2 2zm0 2c-1.100 0-2 .9-2 2s.9 2 2 2 2-.9 2-2-.9-2-2-2zm0 6c-1.100 0-2 .9-2 2s.9 2 2 2 2-.9 2-2-.9-2-2-2z"/></svg>
<svg style="left:167.8px;top:48.2px;width:12px;height:12px;" viewBox="0 0 24 24"><path fill="#fff" d="M11.990 18.540l-7.370-5.730L3 14.070l9 7 9-7-1.630-1.270-7.380 5.740zM12 16l7.360-5.730L21 9l-9-7-9 7 1.630 1.270L12 16z"/></svg>
<span id="t96" class="t m" style="top:48.8px;font-size:8.5px;line-height:11px;color:#fff;letter-spacing:0.215px;left:182.6px;">States</span>
<span id="t97" class="t m" style="top:48.8px;font-size:8.5px;line-height:11px;color:#fff;letter-spacing:0.214px;left:215.5px;">sensor_list</span>
<svg style="left:258.95px;top:47.15px;width:14.5px;height:14.5px;" viewBox="0 0 24 24"><path fill="#fff" d="M7 10l5 5 5-5z"/></svg>
<div style="left:277px;top:44.8px;width:1px;height:17.8px;background:rgba(255,255,255,.7)"></div>
<div style="left:287.3px;top:50.7px;width:9.8px;height:2.7px;background:#fff;border-radius:.5px"></div>
<div style="left:287.3px;top:54.3px;width:9.8px;height:2.8px;background:#fff;border-radius:.5px"></div>
<span id="t98" class="t m" style="top:48.8px;font-size:8.5px;line-height:11px;color:#fff;letter-spacing:0.174px;left:301px;">Layouts</span>
<div style="left:630.6px;top:43.1px;width:76.2px;height:21.5px;border:1px solid rgba(255,255,255,.8);border-radius:2.5px"></div>
<svg style="left:637.5px;top:48.1px;width:12px;height:12px;" viewBox="0 0 24 24"><path fill="#fff" stroke="#fff" stroke-width="0.6" d="M19 13h-6v6h-2v-6H5v-2h6V5h2v6h6v2z"/></svg>
<span id="t99" class="t m" style="top:48.8px;font-size:8.5px;line-height:11px;color:#fff;letter-spacing:0.234px;left:652.7px;">Add widget</span>
<svg style="left:715.7px;top:46.6px;width:14.8px;height:14.8px;" viewBox="0 0 24 24"><path fill="#fff" stroke="#fff" stroke-width="0.45" d="M11.990 2C6.470 2 2 6.480 2 12s4.470 10 9.990 10C17.520 22 22 17.520 22 12S17.520 2 11.990 2zM12 20c-4.420 0-8-3.580-8-8s3.580-8 8-8 8 3.580 8 8-3.580 8-8 8zm.5-13H11v6l5.250 3.150.75-1.230-4.500-2.670z"/></svg>
<svg style="left:750.6px;top:46.6px;width:14.8px;height:14.8px;" viewBox="0 0 24 24"><path fill="#fff" d="M19.140 12.940c.04-.3.060-.61.060-.94 0-.32-.02-.64-.07-.94l2.030-1.580c.18-.14.230-.41.120-.61l-1.920-3.320c-.12-.22-.37-.29-.59-.22l-2.390.96c-.5-.38-1.030-.7-1.620-.94l-.36-2.540c-.04-.24-.24-.41-.48-.41h-3.840c-.24 0-.43.170-.47.410l-.36 2.540c-.59.240-1.130.57-1.620.94l-2.390-.96c-.22-.08-.47 0-.59.220L2.740 8.870c-.12.210-.08.470.12.610l2.030 1.580c-.05.3-.09.630-.09.940s.02.640.07.940l-2.030 1.580c-.18.140-.23.410-.12.610l1.920 3.320c.12.220.37.290.59.220l2.390-.96c.5.380 1.030.7 1.620.94l.36 2.540c.05.240.24.410.48.410h3.840c.24 0 .44-.17.470-.41l.36-2.540c.59-.24 1.130-.56 1.620-.94l2.390.96c.22.080.47 0 .59-.22l1.920-3.320c.12-.22.070-.47-.12-.61l-2.010-1.580zM12 15.600c-1.980 0-3.600-1.620-3.600-3.600s1.620-3.600 3.600-3.600 3.600 1.620 3.600 3.600-1.620 3.600-3.600 3.600z"/></svg>
<svg style="left:783.8px;top:47.2px;width:14.4px;height:14.4px;" viewBox="0 0 24 24"><path fill="#fff" stroke="#fff" stroke-width="0.45" d="M3 6h18V4H3c-1.1 0-2 .9-2 2v12c0 1.1.9 2 2 2h4v-2H3V6zm10 6H9v1.78c-.61.55-1 1.33-1 2.22s.39 1.67 1 2.22V20h4v-1.78c.61-.55 1-1.34 1-2.22s-.39-1.67-1-2.22V12zm-2 5.5c-.83 0-1.5-.67-1.5-1.5s.67-1.5 1.5-1.5 1.5.67 1.5 1.5-.67 1.5-1.5 1.5zM22 8h-6c-.5 0-1 .5-1 1v10c0 .5.5 1 1 1h6c.5 0 1-.5 1-1V9c0-.5-.5-1-1-1zm-1 10h-4v-8h4v8z"/></svg>
<svg style="left:815.9px;top:46.3px;width:15.4px;height:15.4px;" viewBox="0 0 24 24"><path fill="#fff" stroke="#fff" stroke-width="0.45" d="M10 18h4v-2h-4v2zM3 6v2h18V6H3zm3 7h12v-2H6v2z"/></svg>
<svg style="left:848.8px;top:46.6px;width:14.8px;height:14.8px;" viewBox="0 0 24 24"><path fill="#fff" stroke="#fff" stroke-width="0.45" d="M13 3c-4.970 0-9 4.030-9 9H1l3.890 3.890.07.14L9 12H6c0-3.870 3.130-7 7-7s7 3.130 7 7-3.130 7-7 7c-1.930 0-3.680-.79-4.940-2.060l-1.420 1.420C8.270 19.990 10.510 21 13 21c4.970 0 9-4.030 9-9s-4.030-9-9-9zm-1 5v5l4.280 2.540.72-1.210-3.500-2.080V8H12z"/></svg>
<div style="left:874px;top:45.2px;width:1px;height:17.8px;background:rgba(255,255,255,.7)"></div>
<svg style="left:883.7px;top:48.5px;width:11.2px;height:11.2px;" viewBox="0 0 24 24"><path fill="#fff" stroke="#fff" stroke-width="0.5" d="M19 6.410L17.590 5 12 10.590 6.410 5 5 6.410 10.590 12 5 17.590 6.410 19 12 13.410 17.590 19 19 17.590 13.410 12z"/></svg>
<span id="t100" class="t m" style="top:48.8px;font-size:8.5px;line-height:11px;color:#fff;letter-spacing:0.039px;left:897.9px;">Cancel</span>
<div style="left:933.9px;top:43.1px;width:50.1px;height:21.8px;border:1px solid rgba(255,255,255,.8);border-radius:2.5px"></div>
<svg style="left:941px;top:48.4px;width:11.4px;height:11.4px;" viewBox="0 0 24 24"><path fill="#fff" stroke="#fff" stroke-width="0.5" d="M9 16.170L4.830 12l-1.420 1.410L9 19 21 7l-1.410-1.410z"/></svg>
<span id="t101" class="t m" style="top:48.8px;font-size:8.5px;line-height:11px;color:#fff;letter-spacing:-0.119px;left:955.1px;">Save</span>
<svg style="left:994.7px;top:46.2px;width:16px;height:16px;" viewBox="0 0 24 24"><path fill="#fff" d="M7 14H5v5h5v-2H7v-3zm-2-4h2V7h3V5H5v5zm12 7h-3v2h5v-5h-2v3zM14 5v2h3v3h2V5h-5z"/></svg>
<div style="left:929px;top:38.1px;width:60.7px;height:33.3px;border:2.7px solid #f0484d;border-radius:1.500px"></div>
<svg style="left:740px;top:8px;width:200px;height:44px" viewBox="740 8 200 44"><path fill="#f0484d" d="M748.6 17.2 L917.6 35.9 L916.4 31.6 L931.8 39.600 L915 44.1 L917 40.300 Z"/></svg>
</div></body></html>
